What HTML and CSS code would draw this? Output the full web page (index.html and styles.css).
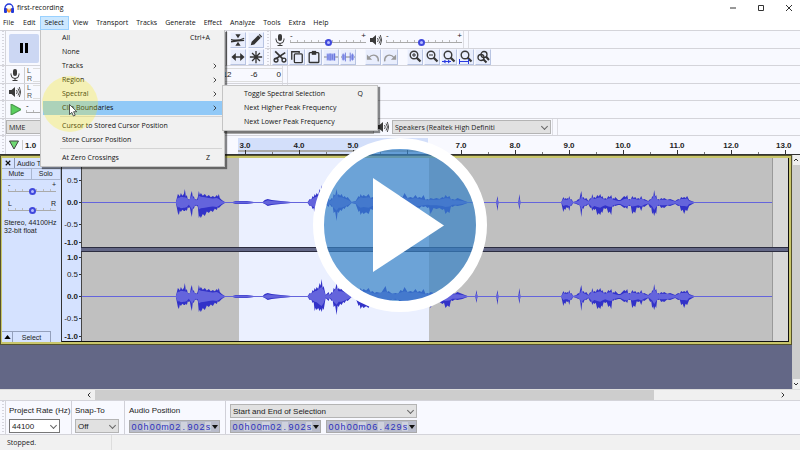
FILE: index.html
```html
<!DOCTYPE html>
<html lang="en">
<head>
<meta charset="utf-8">
<title>first-recording</title>
<link rel="stylesheet" href="styles.css">
</head>
<body>
<svg class="defs" aria-hidden="true">
  <symbol id="mic" viewBox="0 0 12 12"><rect x="4" y="0" width="4" height="7" rx="2" fill="#3a3a3a"/><path d="M2 4.500v1a4 4 0 0 0 8 0v-1M6 9.500v2M3.500 11.500h5" fill="none" stroke="#3a3a3a"/></symbol>
  <symbol id="speaker" viewBox="0 0 12 12"><path d="M0 4h2.500L6 1v10L2.500 8H0z" fill="#3a3a3a"/><path d="M7.500 4q1.500 2 0 4M9 2.500q3 3.500 0 7M10.300 1q2.800 5 0 10" fill="none" stroke="#3a3a3a" stroke-width=".9"/></symbol>
  <symbol id="chev" viewBox="0 0 4 6"><path d="M.7.7 3 3 .7 5.300" fill="none" stroke="#333" stroke-width=".9"/></symbol>
  <symbol id="lens" viewBox="0 0 14 14"><circle cx="6" cy="5" r="3.800" fill="none" stroke="#3a3a3a" stroke-width="1.400"/><path d="m8.600 7.600 3.900 3.900" stroke="#3a3a3a" stroke-width="2.200"/></symbol>
</svg>
<div class="app">
  <header class="titlebar">
    <svg class="logo" viewBox="0 0 10 10"><path d="M1 6V5a4 4 0 0 1 8 0v1" fill="none" stroke="#2338d8" stroke-width="1.300"/><rect x="0" y="5" width="3" height="5" rx="1" fill="#2338d8"/><rect x="7" y="5" width="3" height="5" rx="1" fill="#2338d8"/><path d="M2.500 7 4 5l1 3 1-3 1.500 2L6 9.500H4z" fill="#f5901e"/></svg>
    <span class="name">first-recording</span>
    <button class="win" aria-label="Minimize"><svg viewBox="0 0 8 8"><path d="M1 4h6" stroke="#333"/></svg></button>
    <button class="win" aria-label="Maximize"><svg viewBox="0 0 8 8"><path d="M1.500 1.500h5v5h-5z" fill="none" stroke="#333"/></svg></button>
    <button class="win" aria-label="Close"><svg viewBox="0 0 8 8"><path d="m1 1 6 6M7 1 1 7" stroke="#333"/></svg></button>
  </header>
  <nav class="menubar">
    <button>File</button><button>Edit</button>
    <button class="open">Select</button>
    <button>View</button><button>Transport</button><button>Tracks</button><button>Generate</button><button>Effect</button><button>Analyze</button><button>Tools</button><button>Extra</button><button>Help</button>
    <div class="menu">
      <button class="item">All<kbd>Ctrl+A</kbd></button>
      <button class="item">None</button>
      <button class="item">Tracks<svg><use href="#chev"/></svg></button>
      <button class="item">Region<svg><use href="#chev"/></svg></button>
      <button class="item">Spectral<svg><use href="#chev"/></svg></button>
      <button class="item active">Clip Boundaries<svg><use href="#chev"/></svg></button>
      <hr>
      <button class="item">Cursor to Stored Cursor Position</button>
      <button class="item">Store Cursor Position</button>
      <hr>
      <button class="item">At Zero Crossings<kbd>Z</kbd></button>
      <div class="menu submenu">
        <button class="item">Toggle Spectral Selection<kbd>Q</kbd></button>
        <button class="item">Next Higher Peak Frequency</button>
        <button class="item">Next Lower Peak Frequency</button>
      </div>
      <span class="spot"><svg viewBox="0 0 9 13"><path d="M.5.5v10l2.300-2.200 1.600 3.700 1.800-.8-1.600-3.500h3.200z" fill="#fff" stroke="#333" stroke-width=".8"/></svg></span>
    </div>
  </nav>

  <section class="upper">
    <div class="transport"><i class="grip"></i><button class="pause" aria-label="Pause"><svg viewBox="0 0 10 12"><path d="M1 1h3v10H1zM6 1h3v10H6z"/></svg></button></div>
    <div class="tools">
      <button class="tool" aria-label="Envelope"><svg viewBox="0 0 16 14"><path d="M0 6.500q8 2 15-1.500M0 9q8-1 15-1.500" fill="none" stroke="#333" stroke-width="1.500"/><path d="M5 .5h6L8 5zM5 13.500h6L8 9z" fill="#333"/></svg></button>
      <button class="tool" aria-label="Draw"><svg viewBox="0 0 16 14"><path d="m2 13 1-4L10.500 1.500 13.500 4.500 6 12zM11.200 1l1-1L15 3l-1 1z" fill="#333"/></svg></button>
      <button class="tool" aria-label="Time shift"><svg viewBox="0 0 16 14"><path d="M3 7h10" stroke="#333" stroke-width="1.700"/><path d="M5.500 2.500v9L.5 7zM10.500 2.500v9l5-4.500z" fill="#333"/></svg></button>
      <button class="tool" aria-label="Multi-tool"><svg viewBox="0 0 16 14"><path d="M8 0v14M1 7h14M3.500 2.500l9 9M12.500 2.500l-9 9" stroke="#333" stroke-width="1.500"/></svg></button>
    </div>
    <div class="stack">
      <div class="bar">
        <i class="grip"></i>
        <svg class="ic"><use href="#mic"/></svg>
        <label class="vol"><span>-</span><span>+</span><input type="range" aria-label="Recording volume" value="50"></label>
        <svg class="ic"><use href="#speaker"/></svg>
        <label class="vol"><span>-</span><span>+</span><input type="range" aria-label="Playback volume" value="46"></label>
        <i class="end"></i>
      </div>
      <div class="bar edit">
        <i class="grip"></i>
        <button class="tool" aria-label="Cut"><svg viewBox="0 0 16 14"><path d="m2.500.5 9 9M2.500 9.500 14 2" stroke="#333" stroke-width="1.900"/><circle cx="3.500" cy="10.500" r="2.200" fill="none" stroke="#333" stroke-width="1.500"/><circle cx="12.500" cy="10.500" r="2.200" fill="none" stroke="#333" stroke-width="1.500"/></svg></button>
        <button class="tool" aria-label="Copy"><svg viewBox="0 0 16 14"><path d="M2 10V1h8.500v1.500" fill="none" stroke="#333" stroke-width="1.500"/><rect x="5" y="3.500" width="9" height="10" rx="1" fill="none" stroke="#333" stroke-width="1.500"/></svg></button>
        <button class="tool" aria-label="Paste"><svg viewBox="0 0 16 14"><rect x="2.500" y="2" width="11" height="11.300" rx="1" fill="none" stroke="#333" stroke-width="1.500"/><path d="M5.500 0h5v4.500h-5z" fill="#333"/></svg></button>
        <button class="tool" aria-label="Trim"><svg viewBox="0 0 16 14"><path d="M0 7h16" stroke="#777" /><path d="M3 3h10v8H3z" fill="#9ba6ee"/><path d="M4.500 4v6M7 3v8M9.500 4v6M12 3v8" stroke="#6470dc"/></svg></button>
        <button class="tool" aria-label="Silence"><svg viewBox="0 0 16 14"><path d="M0 7h16" stroke="#777"/><path d="M1 4h4v6H1zM11 4h4v6h-4z" fill="#9ba6ee"/><path d="M2.500 3v8M5 2v10M10.500 2v10M13 3v8" stroke="#6470dc"/></svg></button>
        <i class="gap"></i>
        <button class="tool" aria-label="Undo"><svg viewBox="0 0 16 14"><path d="M3 8q4.500-5 9-2 2.500 2 2 6" fill="none" stroke="#999" stroke-width="1.600"/><path d="M1 4v6h6z" fill="#999"/></svg></button>
        <button class="tool" aria-label="Redo"><svg viewBox="0 0 16 14"><path d="M13 8Q8.500 3 4 6q-2.500 2-2 6" fill="none" stroke="#999" stroke-width="1.600"/><path d="M15 4v6H9z" fill="#999"/></svg></button>
        <i class="gap"></i>
        <button class="tool" aria-label="Zoom in"><svg viewBox="0 0 14 14"><use href="#lens"/><path d="M4 5h4M6 3v4" stroke="#333"/></svg></button>
        <button class="tool" aria-label="Zoom out"><svg viewBox="0 0 14 14"><use href="#lens"/><path d="M4 5h4" stroke="#333"/></svg></button>
        <button class="tool" aria-label="Zoom to selection"><svg viewBox="0 0 14 14"><use href="#lens"/><path d="M0 11.500h9" stroke="#2a3be0"/><path d="M3.500 9.500v4l-2.500-2zM6 9.500v4l2.500-2z" fill="#2a3be0"/></svg></button>
        <button class="tool" aria-label="Fit project"><svg viewBox="0 0 14 14"><use href="#lens"/><path d="M.5 11.500h9M.5 9v5M9.500 9v5" stroke="#2a3be0"/></svg></button>
        <button class="tool" aria-label="Zoom toggle"><svg viewBox="0 0 14 14"><circle cx="8" cy="4.500" r="3" fill="none" stroke="#333" stroke-width="1.300"/><circle cx="5" cy="7.500" r="3" fill="none" stroke="#333" stroke-width="1.300"/><path d="m10 6.500 3 3.500M7.500 9.500l3 3" stroke="#333" stroke-width="2"/></svg></button>
      </div>
    </div>
  </section>
  <div class="bar meter"><i class="grip"></i><svg class="ic"><use href="#mic"/></svg><span class="lr">L<br>R</span><span class="field"><b>-12</b><b>-6</b><b>0</b></span><i class="end"></i></div>
  <div class="bar meter short"><i class="grip"></i><svg class="ic"><use href="#speaker"/></svg><span class="lr">L<br>R</span><span class="field"></span><i class="end"></i></div>
  <div class="bar speed"><i class="grip"></i><button class="go" aria-label="Play at speed"><svg viewBox="0 0 10 10"><path d="M1 0v10l9-5z" fill="#5ad05e" stroke="#4a9a4e"/></svg></button><label class="vol"><span>-</span><span></span><input type="range" aria-label="Playback speed" value="50"></label></div>
  <div class="bar device short"><i class="grip"></i>
    <span class="pick host"><select aria-label="Audio host"><option>MME</option></select></span>
    <svg class="ic"><use href="#speaker"/></svg>
    <span class="pick out"><select aria-label="Playback device"><option>Speakers (Realtek High Definiti</option></select></span><i class="end"></i>
  </div>

  <section class="timeline">
    <i class="grip"></i><button class="pin" aria-label="Pinned play head"><svg viewBox="0 0 12 10"><path d="M1.500 1h9L6 9z" fill="#6fd873" stroke="#444"/></svg></button>
    <div class="ruler"><i class="range"></i><span class="first">1.0</span><span></span><span></span><span></span><span>3.0</span><span>4.0</span><span>5.0</span><span></span><span>7.0</span><span>8.0</span><span>9.0</span><span>10.0</span><span>11.0</span><span>12.0</span><span class="last">13.0</span></div>
  </section>

  <main class="workspace">
    <div class="canvas">
      <article class="track">
        <aside class="panel">
          <div class="head"><button aria-label="Close track"><svg viewBox="0 0 8 8"><path d="m1 1 6 6M7 1 1 7" stroke="#111" stroke-width="1.500"/></svg></button><span>Audio Tr</span></div>
          <div class="pair"><button>Mute</button><button>Solo</button></div>
          <label class="vol"><span>-</span><span>+</span><input type="range" aria-label="Gain" value="50"></label>
          <label class="vol"><span>L</span><span>R</span><input type="range" aria-label="Pan" value="50"></label>
          <p>Stereo, 44100Hz<br>32-bit float</p>
          <div class="foot"><button aria-label="Collapse"><svg viewBox="0 0 8 5"><path d="M4 0 8 5H0z"/></svg></button><button>Select</button></div>
        </aside>
        <div class="channels">
          <div class="channel"><ol class="scale"><li></li><li>0.5</li><li>0.0</li><li>-0.5</li><li>-1.0</li></ol><div class="wave"><svg viewBox="81 -44.500 707 89" preserveAspectRatio="none"></svg></div></div>
          <div class="split"></div>
          <div class="channel"><ol class="scale"><li>1.0</li><li>0.5</li><li>0.0</li><li>-0.5</li><li>-1.0</li></ol><div class="wave"><svg viewBox="81 -44.500 707 89" preserveAspectRatio="none"></svg></div></div>
        </div>
      </article>
    </div>
    <div class="vscroll"><svg viewBox="0 0 6 4"><path d="m1 3 2-2 2 2" fill="none" stroke="#333"/></svg><i></i><svg viewBox="0 0 6 4"><path d="m1 1 2 2 2-2" fill="none" stroke="#333"/></svg></div>
  </main>
  <div class="hscroll"><svg viewBox="0 0 4 6"><path d="M3.300.7 1 3l2.300 2.300" fill="none" stroke="#333"/></svg><div><i></i></div><svg viewBox="0 0 4 6"><path d="M.7.7 3 3 .7 5.300" fill="none" stroke="#333"/></svg></div>

  <footer class="selection">
    <i class="grip"></i>
    <div class="group rate"><label for="rate">Project Rate (Hz)</label><span class="pick white"><select id="rate"><option>44100</option></select></span></div>
    <div class="group snap"><label for="snap">Snap-To</label><span class="pick"><select id="snap"><option>Off</option></select></span></div>
    <div class="group"><label for="pos">Audio Position</label><output class="time" id="pos">00h00m02.902s</output></div>
    <div class="group"><span class="pick"><select aria-label="Selection mode"><option>Start and End of Selection</option></select></span>
      <div class="times"><output class="time">00h00m02.902s</output><output class="time">00h00m06.429s</output></div></div>
  </footer>
  <div class="status"><span>Stopped.</span></div>
  <button class="play" aria-label="Play video"><svg viewBox="0 0 174 174"><circle cx="87" cy="87" r="81" fill="#3681c6" fill-opacity=".7"/><circle cx="87" cy="87" r="81.500" fill="none" stroke="#fff" stroke-width="11"/><path d="M60 40v94l71-46.500z" fill="#fff"/></svg></button>
</div>
<script src="app.js"></script>
</body>
</html>
```
FILE: styles.css
```css
* { box-sizing: border-box; }
body { margin: 0; font: 8px/9px "Liberation Sans", Arial, sans-serif; color: #222; background: #f8f9ff; }
button, select, input, output { font: inherit; color: inherit; margin: 0; padding: 0; border: 0; background: none; }
svg { display: block; }
.defs { position: absolute; width: 0; height: 0; }
.app { position: relative; min-height: 100vh; display: flex; flex-direction: column; overflow: hidden; }

.titlebar, .menubar { background: #fff; font: 7px/14px "Open Sans", "Noto Sans", sans-serif; color: #111; display: flex; align-items: center; }
.titlebar { height: 16px; padding: 0 7px 0 4px; }
.logo { width: 10px; height: 10px; margin-right: 3px; }
.name { flex: 1; }
.win { width: 8px; margin-left: 20px; }
.win svg { width: 8px; height: 8px; }
.menubar { position: relative; height: 14px; }
.menubar > button { padding: 0 4px; line-height: 14px; }
.menubar > button:first-child { padding: 0 5px 0 3px; }
.menubar > .open { padding: 0 5px; background: #cce8ff; box-shadow: inset 0 0 0 1px #99d1ff; }
.menu { position: absolute; z-index: 3; left: 40px; top: 14px; width: 185px; padding: 1px 0; background: #f1f1f1; border: solid #c4c4c4; border-width: 0 1px 1px; box-shadow: 2px 2px 1px #0007; }
.menu hr { margin: 1px 2px 2px 19px; border: 0; border-top: 1px solid #d4d4d4; }
.item { display: flex; align-items: center; width: calc(100% - 4px); height: 14px; padding: 0 5px 0 19px; margin: 0 2px; text-align: left; }
.item svg { width: 4px; height: 6px; margin-left: auto; }
.item kbd { font: inherit; margin-left: auto; padding-right: 7px; }
.item.active { background: #91c9f7; }
.submenu { left: 181px; top: 55px; width: 156px; padding: 1px 0; border-width: 1px; }
.spot { position: absolute; left: 1px; top: 46px; width: 56px; height: 56px; border-radius: 50%; background: #fff00040; pointer-events: none; }
.spot svg { width: 9px; height: 13px; margin: 28px 0 0 27px; }

.grip { flex: none; align-self: stretch; width: 6px; border-right: 1px solid #d4d4da; background: repeating-linear-gradient(#d6d6de 0 1px, transparent 1px 3px) 2px 0 / 2px 100% no-repeat; }
.end { align-self: stretch; width: 6px; border: solid #dcdce2; border-width: 0 1px; }
.upper { display: flex; border-top: 1px solid #d4d4da; }
.transport { display: flex; width: 226px; gap: 3px; align-items: center; border-bottom: 1px solid #d4d4da; }
.pause { display: grid; place-items: center; width: 30px; height: 29px; background: #ccd7f3; border-radius: 2px; }
.pause svg { width: 10px; height: 12px; }
.tools { display: grid; grid-template-columns: 16px 16px; gap: 1px 2px; padding: 1px 1px 0 3px; border-left: 1px solid #999; border-bottom: 1px solid #d4d4da; }
.tool { width: 16px; height: 16px; border: 1px solid; border-color: #f2f5ff #b8c4e2 #b8c4e2 #f2f5ff; background: #e9eefd; }
.tool svg { width: 14px; height: 14px; }
.stack { flex: 1; }
.bar { display: flex; align-items: center; height: 18px; border-bottom: 1px solid #d4d4da; }
.stack .bar:last-child, .bar.short, .speed + .bar { height: 17px; }
.edit { gap: 1px; }
.edit .gap { width: 7px; }
.ic { width: 12px; height: 12px; margin: 0 3px; }
.vol { display: grid; grid-template-columns: 1fr 1fr; width: 76px; line-height: 6px; margin: 0 1px; }
.vol span:nth-child(2) { text-align: right; }
.vol input { grid-column: 1 / 3; appearance: none; width: 100%; height: 7px; background: linear-gradient(#aaa, #aaa) 0 3px / 100% 1px no-repeat, repeating-linear-gradient(90deg, #bbb 0 1px, transparent 1px 7px) 0 1px / 100% 3px no-repeat; }
.vol input::-webkit-slider-thumb { appearance: none; width: 7px; height: 7px; border: 2px solid #4048dc; border-radius: 50%; background: #b6bcff; }
.lr { width: 9px; line-height: 8px; font-size: 7px; color: #555; border-left: 1px solid #ccc; padding-left: 2px; }
.field { display: flex; justify-content: flex-end; gap: 19px; align-items: center; width: 249px; height: 14px; padding-right: 1px; border: solid #ddd; border-width: 1px 0; }
.field b { font-weight: 400; }
.go { margin: 0 4px; }
.go svg { width: 11px; height: 11px; }
.pick { position: relative; display: block; height: 14px; }
.pick select { display: block; appearance: none; width: 100%; height: 100%; padding: 0 12px 0 2px; background: #e1e1e1; border: 1px solid #b4b4b4; border-radius: 0; }
.pick.white select { background: #fff; border-color: #777; }
.pick::after { content: ""; position: absolute; right: 4px; top: 4px; width: 4px; height: 4px; border: solid #666; border-width: 0 1px 1px 0; transform: rotate(45deg); }
.host { width: 368px; }
.out { width: 159px; }
.device .end { margin-left: 1px; }
.device .pick, .device select { font-family: "Open Sans", "Noto Sans", sans-serif; font-size: 7px; }

.timeline { display: flex; height: 19px; border-bottom: 1px solid #333; align-items: center; }
.pin { width: 17px; border-right: 1px solid #ccc; }
.pin svg { width: 12px; height: 10px; margin: auto; }
.ruler { position: relative; display: flex; flex: 1; align-self: stretch; overflow: hidden; font-weight: 700; }
.ruler span { position: relative; flex: 54 0 0; min-width: 0; line-height: 19px; text-align: center; background: linear-gradient(#333, #333) 50% 100% / 1px 4px no-repeat, linear-gradient(#777, #777) 0 100% / 1px 2px no-repeat; }
.ruler .first { flex-grow: 33; text-align: left; text-indent: 2px; background: none; }
.ruler .last { flex-grow: 42; text-align: left; text-indent: 18px; background-position: 27px 100%, 0 100%; }
.range { position: absolute; left: 27.700%; width: 24.400%; top: 2px; bottom: 0; background: linear-gradient(#aaa, #aaa) 0 12px / 100% 2px no-repeat #d3dffa; }

.workspace { flex: 1; display: flex; background: #636786; }
.canvas { flex: 1; }
.track { display: flex; border: 3px solid #c9c66b; border-left-width: 2px; outline: 1px solid #55522c; outline-offset: -1px; background: #d5e2ff; }
.panel { display: flex; flex-direction: column; width: 60px; border-right: 1px solid #333; font-size: 7px; }
.head { display: flex; align-items: center; height: 11px; border-bottom: 1px solid #aab6d0; }
.head button { padding: 0 3px; border-right: 1px solid #8894b0; height: 100%; }
.head svg { width: 6px; height: 6px; }
.head span { padding-left: 2px; white-space: nowrap; overflow: hidden; }
.pair { display: flex; height: 11px; }
.pair button { flex: 1; border: solid #aab6d0; border-width: 0 1px 1px 0; line-height: 10px; }
.panel .vol { width: 48px; margin: 2px 6px 4px; }
.panel p { margin: 1px 0 0 2px; line-height: 8px; white-space: nowrap; }
.foot { display: flex; margin-top: auto; }
.foot button { height: 11px; border: solid #94a0bc; border-width: 1px 1px 0 0; }
.foot button:first-child { width: 11px; }
.foot button:last-child { width: 38px; }
.foot svg { width: 7px; height: 4px; margin: auto; }
.channels { flex: 1; border: solid #111; border-width: 0 1px 1px 0; }
.channel { display: flex; }
.scale { display: grid; grid-template-rows: 10px 25px 19px 25px 10px; align-items: center; width: 19px; margin: 0; padding: 0; list-style: none; text-align: right; }
.scale li { padding-right: 3px; background: linear-gradient(#333, #333) 100% 50% / 2px 1px no-repeat; }
.scale li:nth-child(odd) { font-weight: 700; }
.wave { flex: 1; border-left: 1px solid #444; background: linear-gradient(90deg, #c0c0c0 22.200%, #ebf0ff 22.200% 49.100%, #c0c0c0 49.100% 97.700%, #999 97.700% 97.900%, #d8d8d8 97.900%); }
.wave svg { width: 100%; height: 89px; }
.split { height: 5px; margin-left: 19px; background: #636786; border: solid #2c2d40; border-width: 1px 0; }
.vscroll { display: flex; flex-direction: column; gap: 3px; width: 8px; padding: 3px 0; background: #f0f0f0; border-left: 1px solid #ccc; }
.vscroll i { flex: 1; background: #cdcdcd; }
.vscroll svg { width: 6px; height: 4px; }
.hscroll { display: flex; align-items: center; height: 11px; padding: 0 15px 0 87px; background: #f0f0f0; border-top: 1px solid #ddd; }
.hscroll div { flex: 1; height: 100%; margin: 0 4px; }
.hscroll i { display: block; width: 82%; height: 10px; background: #cdcdcd; }
.hscroll svg { width: 4px; height: 6px; }

.selection { display: flex; height: 35px; border: solid #d4d4da; border-width: 1px 0; }
.group { display: flex; flex-direction: column; justify-content: space-between; padding: 3px 5px 1px 4px; border-right: 1px solid #d0d0d8; }
.group:last-child { border: 0; }
.group label { line-height: 14px; white-space: nowrap; }
.rate, .snap { padding-left: 3px; }
.rate { width: 66px; }
.rate .pick { width: 51px; }
.snap { width: 53px; }
.time { display: flex; width: 91px; height: 13px; padding: 1px; background: #b9bccb; border: 1px solid #aaa; color: #2b30bd; font-size: 9px; line-height: 10px; }
.time i { flex: 1 0 0; text-align: center; font-style: normal; }
.time .unit { background: #cfd2dd; }
.time::after { content: ""; align-self: center; margin-left: 1px; border: 3px solid transparent; border-top: 4px solid #111; border-bottom: 0; }
.times { display: flex; gap: 5px; }
.status { height: 15px; padding-left: 7px; background: #f1f1f1; font: 7px/15px "Open Sans", "Noto Sans", sans-serif; }
.status span { display: block; width: 105px; border-right: 1px solid #ddd; }
.play { position: absolute; z-index: 5; left: 50%; top: 50%; width: 174px; height: 174px; transform: translate(-50%, -50%); }
```
FILE: app.js
```js
// Peak envelope of the clip: x, height above zero, depth below zero.
const envelope = [
  [81,0,0],[175,0,0],[177,8,10],[178,7,12],[180,9,9],[183,8,8],[184,13,8],[186,7,8],[188,3,5],[190,8,10],[191,11,14],[193,6,6],[195,3,3],[197,5,4],[198,11,15],[200,9,15],[204,8,13],[208,7,10],[212,6,9],[216,7,7],[218,8,5],[219,4,4],[221,2,2],[224,0,0],
  [232,0,0],[235,1,1],[246,1,1],[253,0,0],[262,0,0],[264,2,1],[267,3,3],[271,2,2],[280,1,1],[290,0,0],[294,0,0],
  [307,0,0],[309,3,3],[312,6,6],[314,8,14],[316,9,13],[319,13,14],[321,17,15],[323,10,13],[325,1,1],[328,4,4],[329,1,1],[331,4,4],[333,8,10],[336,13,18],[338,8,10],[341,8,8],[344,6,6],[347,5,4],[351,0,0],[355,1,1],[358,6,9],[360,8,12],[363,7,11],[368,8,11],[372,5,7],[376,4,4],[385,10,8],[388,5,5],[395,3,3],[400,6,6],[404,9,8],[410,5,6],[415,7,9],[419,5,5],[423,7,4],[427,3,5],[430,4,11],[436,4,6],[442,5,7],[445,7,11],[449,6,10],[452,3,4],[457,4,3],[462,2,2],[467,0,0],
  [475,0,0],[476,6,6],[477,0,0],[496,0,0],[497,6,8],[498,0,0],[518,0,0],[519,8,7],[520,0,0],
  [561,0,0],[563,5,9],[565,4,7],[567,4,5],[569,6,8],[571,3,3],[573,0,0],[576,1,1],[578,3,2],[580,7,5],[581,11,14],[583,5,6],[586,4,3],[588,1,1],[590,4,5],[592,8,8],[594,5,7],[597,7,12],[600,8,12],[602,6,10],[605,4,6],[608,6,10],[611,7,12],[613,4,4],[615,5,3],[618,2,2],[620,2,2],[624,6,5],[627,7,6],[629,3,3],[632,6,11],[635,5,10],[638,4,5],[641,6,8],[644,3,4],[648,1,1],[650,3,5],[652,6,11],[654,12,13],[656,7,11],[658,3,3],[661,4,5],[664,4,5],[670,3,3],[675,1,1],[678,3,3],[681,5,8],[684,5,11],[687,6,8],[689,2,3],[694,0,0],[772,0,0]
];

function outline(points) {
  const top = points.map(([x, up]) => `${x},${-up - 0.4}`);
  const bottom = points.map(([x, , down]) => `${x},${down + 0.4}`).reverse();
  return `M${top.join("L")}L${bottom.join("L")}Z`;
}

const rough = [];
envelope.forEach(([x, up, down], i) => {
  rough.push([x, up, down]);
  const next = envelope[i + 1];
  if (next && up > 2 && next[1] > 2 && next[0] - x > 1) {
    rough.push([(x + next[0]) / 2, Math.min(up, next[1]) * 0.8, Math.min(down, next[2]) * 0.85]);
  }
});
const core = envelope.map(([x, up, down]) => {
  const level = Math.min(up, down) * 0.6;
  return [x, level, level];
});

document.querySelectorAll(".wave svg").forEach((svg) => {
  svg.innerHTML = `<path d="${outline(rough)}" fill="#3232c8"/><path d="${outline(core)}" fill="#6464dc"/>`;
});

// Each character of a time field sits in its own cell.
document.querySelectorAll(".time").forEach((field) => {
  const text = field.textContent;
  field.innerHTML = [...text].map((c) => `<i class="${/\d/.test(c) ? "digit" : "unit"}">${c}</i>`).join("");
});
```
